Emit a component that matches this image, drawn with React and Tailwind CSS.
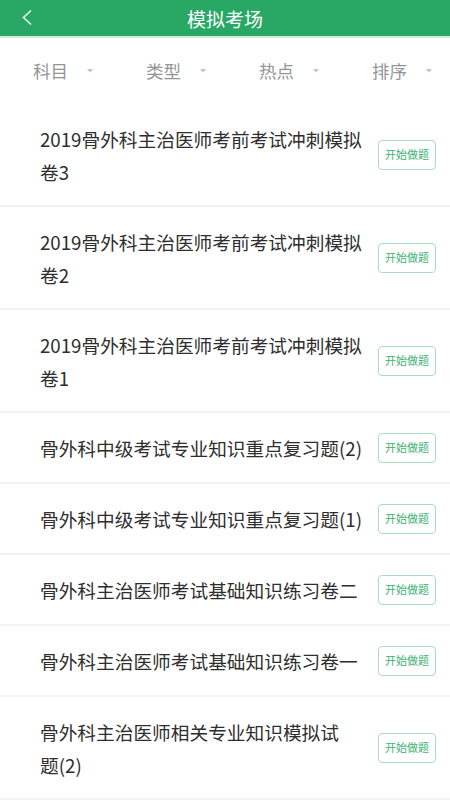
import React from "react";

const items = [
  ["2019骨外科主治医师考前考试冲刺模拟", "卷3"],
  ["2019骨外科主治医师考前考试冲刺模拟", "卷2"],
  ["2019骨外科主治医师考前考试冲刺模拟", "卷1"],
  ["骨外科中级考试专业知识重点复习题(2)"],
  ["骨外科中级考试专业知识重点复习题(1)"],
  ["骨外科主治医师考试基础知识练习卷二"],
  ["骨外科主治医师考试基础知识练习卷一"],
  ["骨外科主治医师相关专业知识模拟试", "题(2)"],
];

const filters = ["科目", "类型", "热点", "排序"];

export default function App() {
  return (
    <div
      className="w-[450px] h-[800px] overflow-hidden bg-white"
      style={{ fontFamily: '"Noto Sans CJK SC", "Noto Sans", sans-serif' }}
    >
      <div className="h-[36px] bg-[#29a865] flex items-center justify-center relative">
        <svg
          className="absolute left-[21px] top-[9px]"
          width="12"
          height="17"
          viewBox="0 0 12 17"
          fill="none"
        >
          <path d="M10 1.5 L2.5 8.5 L10 15.5" stroke="#e6f7ec" strokeWidth="1.6" />
        </svg>
        <span className="text-white text-[19px] leading-none">模拟考场</span>
      </div>
      <div className="h-[2px] bg-[#cdeedb]" />
      <div className="h-[66px] flex items-center justify-between pl-[33px] pr-[16px]">
        {filters.map((f) => (
          <div key={f} className="flex items-center w-[62px]">
            <span className="text-[17.5px] text-[#959595] leading-none">{f}</span>
            <svg className="ml-[19px]" width="6" height="4" viewBox="0 0 6 4">
              <path d="M0 0 L6 0 L3 3.5 Z" fill="#c4c4c4" />
            </svg>
          </div>
        ))}
      </div>
      <div className="flex flex-col">
        {items.map((lines, i) => (
          <div
            key={i}
            className={
              lines.length > 1
                ? "flex items-center justify-between pl-[40px] pr-[14px] py-[17.5px] border-b-2 border-[#f3f3f3]"
                : "flex items-center justify-between pl-[40px] pr-[14px] py-[18px] border-b-2 border-[#f3f3f3]"
            }
          >
            <div className="text-[18.7px] leading-[33px] text-[#2e2e2e] whitespace-nowrap">
              {lines.map((l, j) => (
                <div key={j}>{l}</div>
              ))}
            </div>
            <div className="w-[58px] h-[30px] border border-[#a9dcc1] rounded-[4px] flex items-center justify-center text-[11px] text-[#3cb274] leading-none">
              开始做题
            </div>
          </div>
        ))}
      </div>
    </div>
  );
}
